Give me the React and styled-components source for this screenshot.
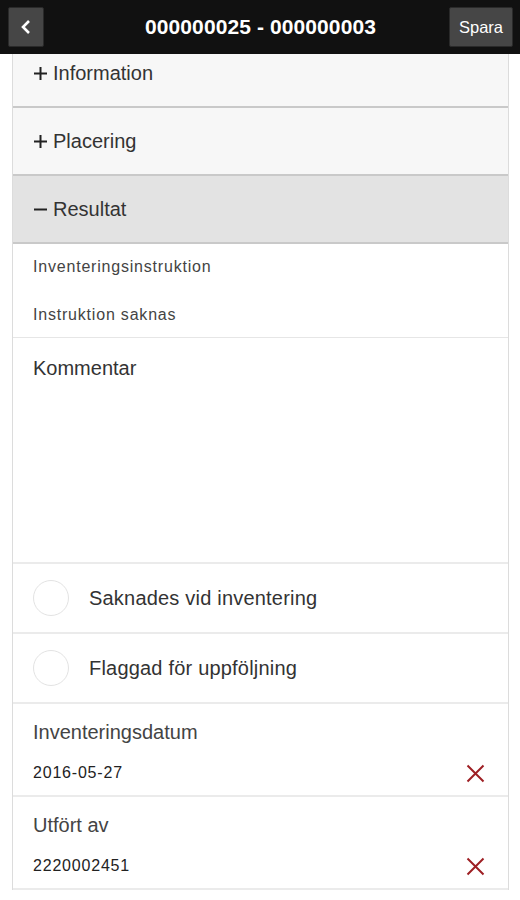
import React from "react";
import styled, { createGlobalStyle } from "styled-components";

const Global = createGlobalStyle`
  html, body { margin: 0; padding: 0; background: #fff; }
  body { font-family: "Liberation Sans", Arial, sans-serif; width: 520px; height: 900px; overflow: hidden; }
`;

const Page = styled.div`
  width: 520px;
  height: 900px;
  background: #fff;
  overflow: hidden;
`;

const Header = styled.header`
  position: relative;
  z-index: 2;
  height: 54px;
  background: #111;
  display: grid;
  grid-template-columns: 1fr auto 1fr;
  align-items: center;
  padding: 0 7px 0 8px;
  box-sizing: border-box;
`;

const HeadButton = styled.button`
  justify-self: ${(p) => p.$side};
  height: 40px;
  min-width: ${(p) => p.$w}px;
  padding: 0 ${(p) => (p.$icon ? 0 : 8)}px;
  background: #464646;
  border: 1px solid #2a2a2a;
  border-radius: 2px;
  color: #fff;
  font-family: "Liberation Sans", Arial, sans-serif;
  font-size: 16.5px;
  display: flex;
  align-items: center;
  justify-content: center;
  box-sizing: border-box;
`;

const Title = styled.h1`
  margin: 0;
  color: #fff;
  font-size: 21px;
  font-weight: bold;
  letter-spacing: 0.1px;
`;

const Content = styled.div`
  margin: -14px 11px 0 12px;
  border-left: 1px solid #dcdcdc;
  border-right: 1px solid #dcdcdc;
`;

const SectionHead = styled.div`
  height: 68px;
  display: flex;
  align-items: center;
  padding-left: 20px;
  background: ${(p) => (p.$open ? "#e3e3e3" : "#f7f7f7")};
  border-bottom: 2px solid #c9c9c9;
  box-sizing: border-box;
  font-size: 20px;
  color: #333;
  gap: 5px;
`;

const Sign = styled.svg`
  width: 15px;
  height: 15px;
  flex: none;
`;

const InfoBlock = styled.div`
  padding: 14px 20px 13px;
  border-bottom: 1px solid #e6e6e6;
  display: flex;
  flex-direction: column;
  gap: 30px;
  font-size: 16px;
  letter-spacing: 0.8px;
  color: #444;
`;

const Comment = styled.div`
  height: 226px;
  padding: 19px 20px 0;
  box-sizing: border-box;
  font-size: 20px;
  color: #333;
  border-bottom: 2px solid #ebebeb;
`;

const CheckRow = styled.label`
  height: 70px;
  display: flex;
  align-items: center;
  padding-left: 20px;
  gap: 20px;
  box-sizing: border-box;
  border-bottom: 2px solid #ebebeb;
  font-size: 20px;
  letter-spacing: 0.2px;
  color: #333;
`;

const Circle = styled.span`
  width: 34px;
  height: 34px;
  border-radius: 50%;
  border: 1px solid #e3e3e3;
  background: #fff;
  flex: none;
`;

const Field = styled.div`
  height: 93px;
  padding: 17px 20px 0;
  box-sizing: border-box;
  border-bottom: 2px solid #ebebeb;
  display: flex;
  flex-direction: column;
`;

const FieldLabel = styled.div`
  font-size: 20px;
  color: #444;
`;

const FieldValueRow = styled.div`
  margin-top: 18px;
  display: flex;
  align-items: center;
  justify-content: space-between;
  padding-right: 3px;
`;

const FieldValue = styled.span`
  font-size: 16px;
  letter-spacing: 0.8px;
  color: #222;
`;

const Clear = styled.svg`
  width: 19px;
  height: 19px;
  margin-top: 2px;
`;

const Plus = () => (
  <Sign viewBox="0 0 15 15">
    <path d="M7.5 1v13M1 7.5h13" stroke="#222" strokeWidth="2" />
  </Sign>
);
const Minus = () => (
  <Sign viewBox="0 0 15 15">
    <path d="M1 7.5h13" stroke="#222" strokeWidth="2" />
  </Sign>
);

const ClearIcon = () => (
  <Clear viewBox="0 0 19 19">
    <path d="M1.5 1.5l16 16M17.5 1.5l-16 16" stroke="#9e1f24" strokeWidth="2" />
  </Clear>
);

export default function App() {
  return (
    <Page>
      <Global />
      <Header>
        <HeadButton $w={36} $icon $side="start" aria-label="Tillbaka">
          <svg width="12" height="16" viewBox="0 0 12 16">
            <path d="M9 2L3 8l6 6" fill="none" stroke="#fff" strokeWidth="2.6" />
          </svg>
        </HeadButton>
        <Title>000000025 - 000000003</Title>
        <HeadButton $w={64} $side="end">Spara</HeadButton>
      </Header>
      <Content>
        <SectionHead>
          <Plus />
          Information
        </SectionHead>
        <SectionHead>
          <Plus />
          Placering
        </SectionHead>
        <SectionHead $open>
          <Minus />
          Resultat
        </SectionHead>
        <InfoBlock>
          <span>Inventeringsinstruktion</span>
          <span>Instruktion saknas</span>
        </InfoBlock>
        <Comment>Kommentar</Comment>
        <CheckRow>
          <Circle />
          Saknades vid inventering
        </CheckRow>
        <CheckRow>
          <Circle />
          Flaggad för uppföljning
        </CheckRow>
        <Field>
          <FieldLabel>Inventeringsdatum</FieldLabel>
          <FieldValueRow>
            <FieldValue>2016-05-27</FieldValue>
            <ClearIcon />
          </FieldValueRow>
        </Field>
        <Field>
          <FieldLabel>Utfört av</FieldLabel>
          <FieldValueRow>
            <FieldValue>2220002451</FieldValue>
            <ClearIcon />
          </FieldValueRow>
        </Field>
      </Content>
    </Page>
  );
}
